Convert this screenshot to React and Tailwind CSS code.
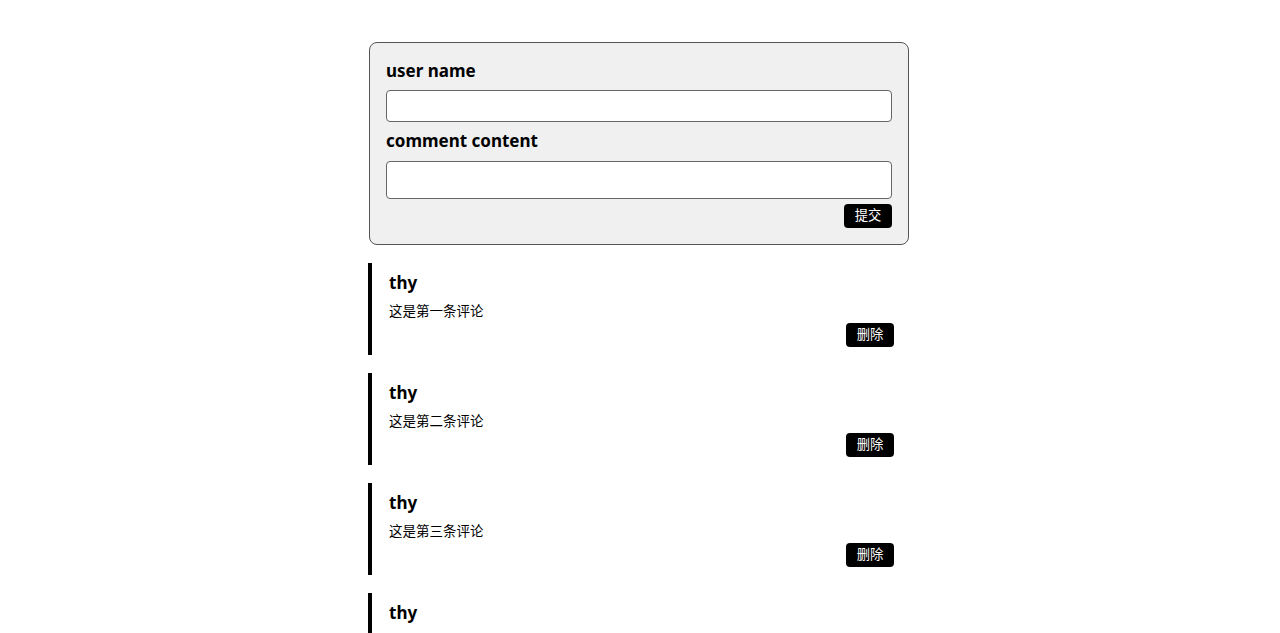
const comments = [
  { id: 1, name: 'thy', content: '这是第一条评论' },
  { id: 2, name: 'thy', content: '这是第二条评论' },
  { id: 3, name: 'thy', content: '这是第三条评论' },
  { id: 4, name: 'thy', content: '这是第四条评论' },
  { id: 5, name: 'thy', content: '这是第五条评论' },
];

const font = { fontFamily: '"Noto Sans", "Noto Sans CJK SC", sans-serif' };

function CommentForm() {
  return (
    <div className="ml-px w-[540px] rounded-lg border border-[#555] bg-[#f0f0f0] px-4 pt-4 pb-4">
      <div className="text-[17px] leading-6 font-bold text-black">user name</div>
      <input className="mt-[7px] block h-8 w-full rounded border border-[#666] bg-white px-2 text-sm outline-none" />
      <div className="mt-[7px] text-[17px] leading-6 font-bold text-black">comment content</div>
      <input className="mt-2 block h-[38px] w-full rounded border border-[#666] bg-white px-2 text-sm outline-none" />
      <div className="mt-[5px] flex justify-end">
        <button className="h-6 w-12 rounded bg-black text-[13.33px] text-white">提交</button>
      </div>
    </div>
  );
}

function CommentItem({ item }) {
  return (
    <div className="mt-[18px] border-l-4 border-black pt-2 pb-2 pl-[17px] pr-[15px]">
      <div className="text-[17px] leading-6 font-bold text-black">{item.name}</div>
      <div className="mt-[6px] text-[13.5px] leading-5 text-black">{item.content}</div>
      <div className="mt-[2px] flex justify-end">
        <button className="h-6 w-12 rounded bg-black text-[13.33px] text-white">删除</button>
      </div>
    </div>
  );
}

export default function App() {
  return (
    <div className="min-h-screen bg-white pr-[3px]" style={font}>
      <div className="mx-auto w-[541px] pt-[42px] pb-10">
        <CommentForm />
        {comments.map((c) => (
          <CommentItem key={c.id} item={c} />
        ))}
      </div>
    </div>
  );
}
